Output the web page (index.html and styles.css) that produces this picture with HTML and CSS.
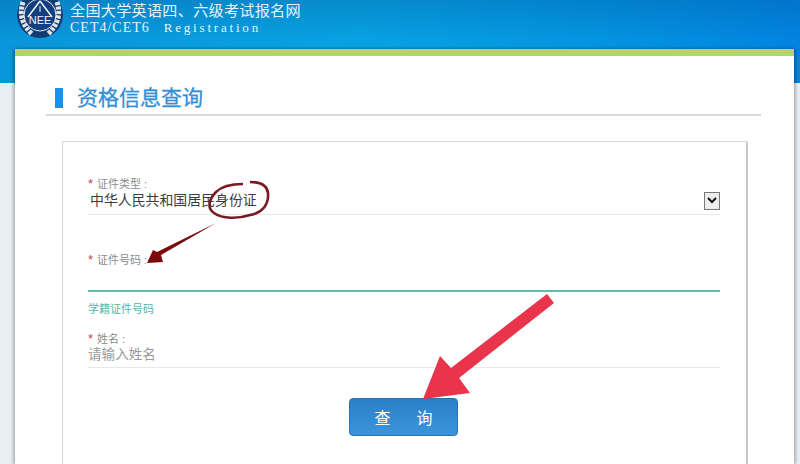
FILE: index.html
```html
<!DOCTYPE html>
<html lang="zh-CN">
<head>
    <meta charset="UTF-8">
    <title>CET4/CET6 Registration</title>
    <link rel="stylesheet" href="styles.css">
</head>
<body>
    <header class="top">
        <svg class="logo" width="46" height="38" viewBox="0 0 46 38">
            <circle cx="23" cy="15" r="23" fill="#143a72"/>
            <path d="M6 2 Q0 20 15 34 M40 2 Q46 20 31 34" fill="none" stroke="#dfe5ec" stroke-width="5" stroke-dasharray="3.2 1.3"/>
            <circle cx="23" cy="15" r="16" fill="#123f80" stroke="#e6edf4" stroke-width="1"/>
            <path d="M23 1 L35 17 M23 1 L11 17" fill="none" stroke="#eef3f8" stroke-width="1.5"/>
            <path d="M23 6 V12" stroke="#eef3f8" stroke-width="1"/>
            <text x="23" y="24" class="logo-text" text-anchor="middle">NEE</text>
        </svg>
        <div class="brand">
            <div class="brand-cn">全国大学英语四、六级考试报名网</div>
            <div class="brand-en">CET4/CET6<span>Registration</span></div>
        </div>
    </header>

    <main class="page">
        <h1 class="title">资格信息查询</h1>
        <div class="card">
            <div class="field field-type">
                <label class="label"><i>*</i>证件类型 :</label>
                <div class="value">
                    <span>中华人民共和国居民身份证</span>
                    <span class="select-btn">
                        <svg width="10" height="7" viewBox="0 0 10 7"><path d="M1 1 L5 5 L9 1" fill="none" stroke="#111" stroke-width="2"/></svg>
                    </span>
                </div>
            </div>
            <div class="field field-number">
                <label class="label"><i>*</i>证件号码 :</label>
            </div>
            <div class="hint">学籍证件号码</div>
            <div class="field field-name">
                <label class="label"><i>*</i>姓名 :</label>
                <div class="value placeholder">请输入姓名</div>
            </div>
            <div class="actions">
                <button class="button"><span>查</span><span>询</span></button>
            </div>
        </div>
    </main>

    <!-- hand drawn marks on top of the form -->
    <svg class="marks" width="800" height="464" viewBox="0 0 800 464">
        <path d="M243 184 C230 184 222 186 216 192 C210 198 206 208 214 213 C222 219 238 219 250 215 C262 213 269 205 268 193 C267 184 258 182 250 182" fill="none" stroke="#7b1a22" stroke-width="2.6"/>
        <path d="M216 223 L161 255 L163 262 L147 263 L153 250 L157 252 Z" fill="#7c0a0a"/>
        <path d="M547 294 L554 303 L459 378 L470 393 L423 399 L440 356 L451 368 Z" fill="#e9344c"/>
    </svg>
</body>
</html>
```

FILE: styles.css
```css
body {
    font-family: "Liberation Sans", "Noto Sans CJK SC", sans-serif;
    background-color: #e9eef3;
    margin: 0;
    height: 464px;
    overflow: hidden;
    position: relative;
}
.top {
    height: 83px;
    background:
        linear-gradient(rgba(0, 60, 130, 0.22), rgba(0, 60, 130, 0) 40px),
        linear-gradient(90deg, #0a96da 0%, #08a2e2 45%, #0494e0 75%, #0284e0 100%);
    display: flex;
    align-items: flex-start;
    gap: 7px;
    padding-left: 17px;
    box-sizing: border-box;
}
.logo {
    flex: none;
}
.logo-text {
    font-size: 11px;
    fill: #f4f7fa;
    font-family: "Liberation Sans", sans-serif;
}
.brand {
    color: #e6f3fb;
    padding-top: 2px;
}
.brand-cn {
    font-size: 15.1px;
    line-height: 17px;
    letter-spacing: 0.3px;
    white-space: nowrap;
}
.brand-en {
    font-family: "Liberation Serif", serif;
    font-size: 14px;
    line-height: 15px;
    margin-top: 1px;
    letter-spacing: 1px;
    white-space: nowrap;
}
.brand-en span {
    margin-left: 14px;
    letter-spacing: 2.8px;
    font-size: 13px;
}
.page {
    position: absolute;
    left: 15px;
    top: 49px;
    width: 779px;
    height: 415px;
    box-sizing: border-box;
    background: white;
    border-top: 7px solid #b2d36f;
    box-shadow: -2px 0 3px rgba(0, 0, 0, 0.25), 2px 0 3px rgba(0, 0, 0, 0.25);
    padding: 27px 33px 0 31px;
}
.title {
    margin: 0;
    height: 31px;
    line-height: 30px;
    border-bottom: 2px solid #d9d9d9;
    font-size: 21px;
    font-weight: normal;
    -webkit-text-stroke: 0.3px #3190d8;
    color: #3190d8;
    padding-left: 31px;
    position: relative;
}
.title::before {
    content: "";
    position: absolute;
    left: 9px;
    top: 5px;
    width: 8px;
    height: 20px;
    background-color: #1793ee;
}
.card {
    margin: 25px 13px 0 16px;
    height: 340px;
    box-sizing: border-box;
    border: 1px solid #d4d4d4;
    border-right: 2px solid #c8c8c8;
    border-radius: 2px;
    padding: 35px 26px 0 25px;
    position: relative;
}
.field {
    border-bottom: 1px solid #e8e8e8;
}
.label {
    display: block;
    font-size: 11px;
    line-height: 14px;
    color: #8c8c8c;
}
.label i {
    color: #c0444c;
    font-size: 13px;
    font-style: normal;
    margin-right: 4px;
}
.value {
    display: flex;
    justify-content: space-between;
    align-items: center;
    font-size: 13.9px;
    line-height: 19px;
    color: #3c3c3c;
    padding: 0 0 4px 2px;
}
.placeholder {
    color: #9a9a9a;
    padding: 0 0 3px 0;
    line-height: 18px;
    font-size: 13.6px;
}
.select-btn {
    width: 16px;
    height: 18px;
    box-sizing: border-box;
    border: 1px solid #777;
    background-color: #eee;
    display: flex;
    align-items: center;
    justify-content: center;
}
.field-number {
    margin-top: 38px;
    height: 37px;
    border-bottom: 2px solid #62b9ad;
}
.hint {
    font-size: 11px;
    line-height: 14px;
    color: #55b5ad;
    margin-top: 10px;
}
.field-name {
    margin-top: 16px;
}
.actions {
    display: flex;
    justify-content: center;
    margin-top: 30px;
    padding-right: 2px;
}
.button {
    background: linear-gradient(#2b80c8, #3a94dc);
    color: white;
    width: 109px;
    height: 38px;
    border: 1px solid #2a72ad;
    border-radius: 4px;
    font-family: inherit;
    font-size: 16px;
    padding: 0 0 0 1px;
    display: flex;
    align-items: center;
    justify-content: center;
    gap: 26px;
}
.marks {
    position: absolute;
    left: 0;
    top: 0;
    pointer-events: none;
}
```
